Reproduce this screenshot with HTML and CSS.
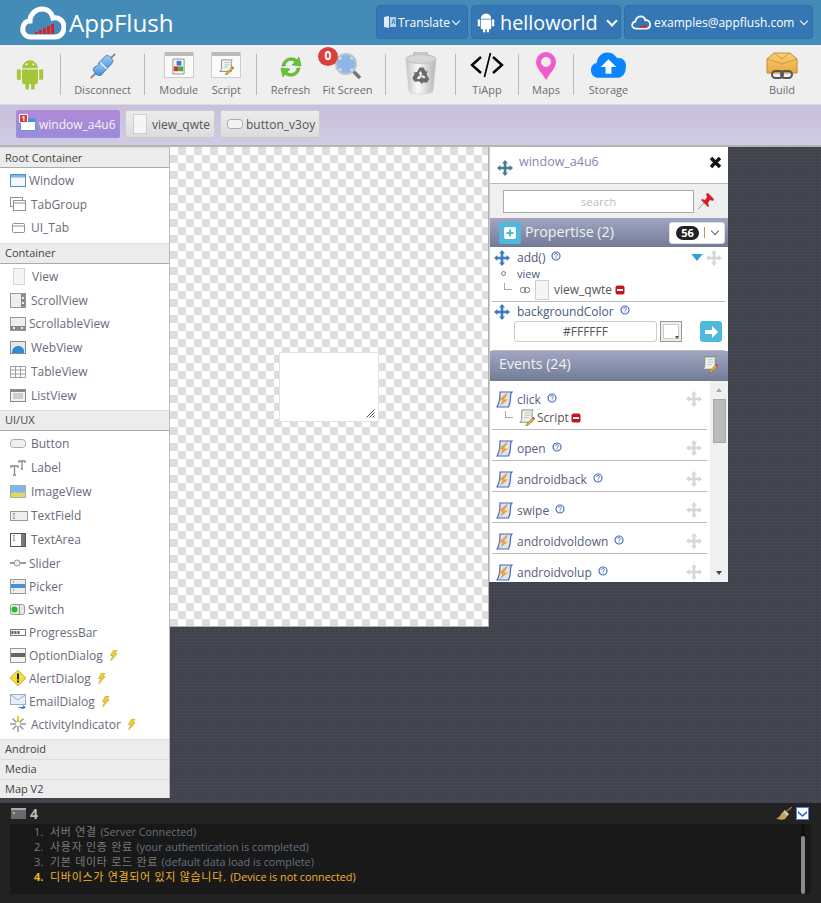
FILE: index.html
```html
<!DOCTYPE html>
<html>
<head>
    <title>AppFlush</title>
    <link rel="stylesheet" href="styles.css">
</head>
<body>
<svg class="sprite" width="0" height="0">
    <defs>
        <linearGradient id="blueGrad" x1="0" y1="0" x2="0" y2="1"><stop offset="0" stop-color="#9fd0f5"/><stop offset="1" stop-color="#3c8cd8"/></linearGradient>
        <linearGradient id="trashGrad" x1="0" y1="0" x2="1" y2="0"><stop offset="0" stop-color="#c4c4c4"/><stop offset=".4" stop-color="#fafafa"/><stop offset="1" stop-color="#b4b4b4"/></linearGradient>
        <linearGradient id="boxGrad" x1="0" y1="0" x2="0" y2="1"><stop offset="0" stop-color="#f8cf7a"/><stop offset="1" stop-color="#e8a93c"/></linearGradient>
        <symbol id="move" viewBox="0 0 16 16"><path d="M8 0l3 3.400H9.300v3.300h3.300V5L16 8l-3.400 3V9.300H9.300v3.300H11L8 16l-3-3.400h1.700V9.300H3.400V11L0 8l3.400-3v1.700h3.300V3.400H5z"/></symbol>
        <symbol id="help" viewBox="0 0 10 10"><circle cx="5" cy="5" r="4" fill="#fff" stroke="#4a6fc0" stroke-width="1.200"/><path d="M3.600 4c0-2 2.900-2 2.900-.3 0 1-1.400 1-1.400 2.100" fill="none" stroke="#4a6fc0" stroke-width="1"/><rect x="4.600" y="6.500" width="1" height="1" fill="#4a6fc0"/></symbol>
        <symbol id="remove" viewBox="0 0 10 10"><rect x=".5" y=".5" width="9" height="9" rx="2" fill="#c4161c"/><rect x="2" y="4" width="6" height="2" fill="#fff"/></symbol>
        <symbol id="bolt" viewBox="0 0 10 12"><path d="M5 0h4L6.500 4H9L2 12l2-6H1.500z" fill="#f0d030" stroke="#b89a20" stroke-width=".6"/></symbol>
        <symbol id="event" viewBox="0 0 17 17"><path d="M4 1h12c-1.500 1-1.500 3-1.500 5s-.5 7-2 10H1c2-3 3-8 3-15z" fill="#dbe4f6" stroke="#4a68b8" stroke-width="1.200"/><path d="M10 2.500L2.500 9.500h4L4 15l8-6.500H8l4-6z" fill="#e9a13b"/></symbol>
        <symbol id="scriptdoc" viewBox="0 0 18 18"><path d="M4 1h12c-1 1-1 2-1 4v9H2c1-1 2-2 2-5z" fill="#eef3ef" stroke="#7d8a80"/><path d="M7 4h6M7 6.500h6M6.500 9h5" stroke="#b8c4bc"/><path d="M9 16l7-7 1.500 1.500-7 7-2 .5z" fill="#e8b83c" stroke="#8a5a20" stroke-width=".6"/><path d="M15.500 9.500l1-1 1.500 1.500-1 1z" fill="#d0342c"/></symbol>
        <symbol id="viewbox" viewBox="0 0 14 20"><rect x=".5" y=".5" width="13" height="19" fill="#f5f5f5" stroke="#cfcfcf"/></symbol>
        <path id="recycleArrow" d="M12.500 22l3-5.500h4l2.500 4.200 1.700-1-1.700 5.300-5.300-1.100 1.700-1-1.600-2.700h-.6l-1.500 2.600z"/>
    </defs>
</svg>

<div class="topbar">
    <div class="brand">
        <svg class="cloud" viewBox="0 0 46 34" width="46" height="34">
            <path d="M11 31C4 31 2 25 3 21c1-4 4-6 7-6 0-6 5-12 12-12 6 0 10 4 11 9 5-1 11 2 11 9 0 6-4 10-9 10z" fill="none" stroke="#fff" stroke-width="5"/>
            <path d="M15 28v-2h3v2zM19 28v-4h3v4zM23 28v-6h3v6zM27 28v-8h3v8zM31 28v-10h3v10z" fill="#d8232a"/>
        </svg>
        <span class="brand-name">AppFlush</span>
    </div>
    <div class="top-buttons">
        <div class="btn btn-translate">
            <svg width="14" height="14" viewBox="0 0 14 14"><path d="M1 2l5-1v12l-5-1z" fill="#dfeaf5"/><path d="M7 2l6 0v10l-6 0z" fill="#b6d0ea"/><path d="M9 9l1.500-5L12 9" fill="none" stroke="#3577b4"/></svg>
            <span>Translate</span><i class="caret"></i>
        </div>
        <div class="btn btn-project">
            <svg width="18" height="21" viewBox="0 0 24 28"><path fill="#fff" d="M5 9a7 7 0 0 1 14 0zM5 10h14v11a2 2 0 0 1-2 2h-1v4h-3v-4h-2v4H8v-4H7a2 2 0 0 1-2-2zM1 10h3v9H1zM20 10h3v9h-3z"/></svg>
            <span>helloworld</span><i class="caret caret-big"></i>
        </div>
        <div class="btn btn-user">
            <svg width="20" height="15" viewBox="0 0 46 34"><path d="M11 31C4 31 2 25 3 21c1-4 4-6 7-6 0-6 5-12 12-12 6 0 10 4 11 9 5-1 11 2 11 9 0 6-4 10-9 10z" fill="none" stroke="#fff" stroke-width="4"/><path d="M18 29h18v-7l-18 5z" fill="#d8232a"/></svg>
            <span>examples@appflush.com</span><i class="caret"></i>
        </div>
    </div>
</div>

<div class="toolbar">
    <div class="tool-group tg-android">
        <svg width="28" height="32" viewBox="0 0 24 28"><path fill="#a4c639" d="M5 9a7 7 0 0 1 14 0zM5 10h14v11a2 2 0 0 1-2 2h-1v4.500h-3V23h-2v4.500H8V23H7a2 2 0 0 1-2-2zM.5 10H4v9H.5zM20 10h3.500v9H20z"/><circle cx="9" cy="5.500" r=".9" fill="#fff"/><circle cx="15" cy="5.500" r=".9" fill="#fff"/></svg>
    </div>
    <div class="tool-group tg-disconnect">
        <div class="tool">
            <svg class="tool-icon" viewBox="0 0 30 30" width="28" height="28">
                <path d="M28 2l-6 6M2 28l6-6" stroke="#888" stroke-width="2"/>
                <path d="M10 12l8-8c3-1 6 2 7 4s1 2-1 5l-7 7z" fill="url(#blueGrad)" stroke="#4a7ab0"/>
                <path d="M5 17l8-5 6 6-6 7c-3 1-6-1-7-3s-2-3-1-5z" fill="url(#blueGrad)" stroke="#4a7ab0"/>
                <path d="M12 11l7 7" stroke="#e8f2fb" stroke-width="1.500"/>
            </svg>
            <span>Disconnect</span>
        </div>
    </div>
    <div class="tool-group tg-files">
        <div class="tool">
            <div class="doc-frame"><svg viewBox="0 0 16 18" width="15" height="17"><path d="M2 1h12v16H2z" fill="#f2f4ef" stroke="#8c9488"/><rect x="6" y="3" width="5" height="5" fill="#3a7bd5"/><rect x="3" y="9" width="5" height="5" fill="#d0342c"/><rect x="8" y="9" width="5" height="5" fill="#4aa83c"/></svg></div>
            <span>Module</span>
        </div>
        <div class="tool">
            <div class="doc-frame"><svg viewBox="0 0 18 18" width="16" height="16"><use href="#scriptdoc"/></svg></div>
            <span>Script</span>
        </div>
    </div>
    <div class="tool-group tg-view">
        <div class="tool">
            <svg class="tool-icon refresh-icon" viewBox="0 0 24 24" width="24" height="24">
                <path d="M3 11C4 5 9 2 14 3c2 .4 3 1 4 2l2-3 2 9-9-1 3-3c-3-3-9-2-10 4z" fill="#66c42c" stroke="#3f9a1a" stroke-width=".5"/>
                <path d="M21 13c-1 6-6 9-11 8-2-.4-3-1-4-2l-2 3-2-9 9 1-3 3c3 3 9 2 10-4z" fill="#66c42c" stroke="#3f9a1a" stroke-width=".5"/>
            </svg>
            <span>Refresh</span>
        </div>
        <div class="tool">
            <span class="fit-badge">0</span>
            <svg class="tool-icon" viewBox="0 0 28 28" width="28" height="28">
                <path d="M18 18l8 8" stroke="#777" stroke-width="3.500"/>
                <circle cx="12" cy="12" r="10" fill="#8fb4e6" stroke="#b8c4cf" stroke-width="2"/>
                <path d="M8 6H6v2M16 6h2v2M8 18H6v-2M16 18h2v-2" fill="none" stroke="#e4eefa" stroke-width="1.200"/>
            </svg>
            <span>Fit Screen</span>
        </div>
    </div>
    <div class="tool-group tg-trash">
        <svg viewBox="0 0 34 46" width="34" height="46">
            <path d="M10 5V2h13v3" fill="none" stroke="#bbb" stroke-width="1.500"/>
            <ellipse cx="17" cy="8" rx="15" ry="4.500" fill="#d6d6d6" stroke="#bbb"/>
            <path d="M2 9l3 31c.5 4 23 4 24 0l3-31c-3 5-27 5-30 0z" fill="url(#trashGrad)" stroke="#c4c4c4" stroke-width=".5"/>
            <g fill="#6a6a6a">
                <use href="#recycleArrow"/>
                <use href="#recycleArrow" transform="rotate(120 17 25)"/>
                <use href="#recycleArrow" transform="rotate(240 17 25)"/>
            </g>
        </svg>
    </div>
    <div class="tool-group tg-tiapp">
        <div class="tool">
            <svg class="tool-icon" viewBox="0 0 34 26" width="34" height="26">
                <path d="M11 5L2 13l9 8M23 5l9 8-9 8" fill="none" stroke="#000" stroke-width="2.400"/>
                <path d="M20 1l-6 24" stroke="#d88a1c" stroke-width="1"/><path d="M20.500 1L14.500 25" stroke="#000" stroke-width="1.600"/>
            </svg>
            <span>TiApp</span>
        </div>
    </div>
    <div class="tool-group tg-maps">
        <div class="tool">
            <svg class="tool-icon" viewBox="0 0 20 28" width="20" height="28"><path fill-rule="evenodd" d="M10 0a10 10 0 0 1 10 10c0 6-6 11-10 18C6 21 0 16 0 10A10 10 0 0 1 10 0zm0 5a5 5 0 1 0 0 10 5 5 0 0 0 0-10z" fill="#f05ccc"/></svg>
            <span>Maps</span>
        </div>
    </div>
    <div class="tool-group tg-storage">
        <div class="tool">
            <svg class="tool-icon" viewBox="0 0 36 27" width="35" height="27"><path fill="#0a84ff" d="M8 26C3 26 0 23 0 18c0-4 3-7 6-7 0-6 5-11 11-11 5 0 8 3 10 6 5-1 9 3 9 7 0 1 0 1-.2 2 .2 7-3.800 11-8 11z"/><path fill="#fff" d="M18 7l8 8h-5v7h-6v-7h-5z"/></svg>
            <span>Storage</span>
        </div>
    </div>
    <div class="tool tool-build">
        <svg class="tool-icon" viewBox="0 0 32 30" width="32" height="30">
            <path d="M1 7l7-6h16l7 6v14H1z" fill="url(#boxGrad)" stroke="#c48a2c"/>
            <path d="M1 7l15 5 15-5M8 1l8 6 8-6" fill="none" stroke="#d79a3a"/>
            <rect x="6" y="19" width="11" height="7" rx="3.500" fill="none" stroke="#555" stroke-width="2"/>
            <rect x="15" y="19" width="11" height="7" rx="3.500" fill="none" stroke="#555" stroke-width="2"/>
        </svg>
        <span>Build</span>
    </div>
</div>

<div class="tabbar">
    <div class="tab tab-active">
        <span class="tab-flag">1</span>
        <svg width="16" height="13" viewBox="0 0 16 13"><rect x=".5" y=".5" width="15" height="12" fill="#fff" stroke="#5b9be0"/><rect x="1" y="1" width="14" height="3" fill="#4a90e2"/></svg>
        <span>window_a4u6</span>
    </div>
    <div class="tab tab-view">
        <svg width="14" height="20"><use href="#viewbox"/></svg>
        <span>view_qwte</span>
    </div>
    <div class="tab tab-button">
        <svg width="16" height="10" viewBox="0 0 16 10"><rect x=".5" y=".5" width="15" height="9" rx="3" fill="#f3f3f3" stroke="#aaa"/></svg>
        <span>button_v3oy</span>
    </div>
</div>

<div class="main">
    <div class="sidebar">
        <div class="side-head">Root Container</div>
        <div class="side-list side-list-root">
            <div class="side-item"><svg width="16" height="13" viewBox="0 0 16 13"><rect x=".5" y=".5" width="15" height="12" fill="#f7f7f7" stroke="#4a90d8"/><rect x="1" y="1" width="14" height="2.500" fill="#7db4ea"/></svg>Window</div>
            <div class="side-item ind"><svg width="16" height="14" viewBox="0 0 16 14"><rect x=".5" y=".5" width="12" height="9" fill="#fff" stroke="#8a949e"/><rect x="3.500" y="3.500" width="12" height="10" fill="#fff" stroke="#8a949e"/><path d="M4 6h11" stroke="#8a949e"/></svg>TabGroup</div>
            <div class="side-item ind"><svg width="13" height="10" viewBox="0 0 13 10" class="nudge"><rect x=".5" y=".5" width="12" height="9" rx="1" fill="#fff" stroke="#8a949e"/><path d="M1 3h11" stroke="#8a949e"/></svg>UI_Tab</div>
        </div>
        <div class="side-head">Container</div>
        <div class="side-list side-list-cont">
            <div class="side-item ind"><svg width="14" height="17" viewBox="0 0 14 20" class="nudge"><use href="#viewbox"/></svg>View</div>
            <div class="side-item ind"><svg width="16" height="15" viewBox="0 0 16 15"><rect x=".5" y=".5" width="15" height="14" fill="#eee" stroke="#999"/><rect x="11" y="1" width="4" height="13" fill="#888"/><rect x="12" y="4" width="2" height="2" fill="#eee"/><rect x="12" y="9" width="2" height="2" fill="#eee"/></svg>ScrollView</div>
            <div class="side-item"><svg width="16" height="14" viewBox="0 0 16 14"><rect x=".5" y=".5" width="15" height="13" fill="#eee" stroke="#999"/><rect x="1" y="9" width="14" height="4" fill="#888"/><rect x="3" y="10" width="2" height="2" fill="#eee"/><rect x="11" y="10" width="2" height="2" fill="#eee"/></svg>ScrollableView</div>
            <div class="side-item ind"><svg width="16" height="13" viewBox="0 0 16 13"><rect x=".5" y=".5" width="15" height="12" fill="#e8e8e8" stroke="#8a8a8a"/><path d="M2 12c0-5 3-7 6-7s6 2 6 5v2z" fill="#2e8bd8"/></svg>WebView</div>
            <div class="side-item ind"><svg width="16" height="12" viewBox="0 0 16 12"><path d="M.5.500h15v11H.500zM.5 4h15M.5 8h15M5.500 0v12M10.500 0v12" fill="none" stroke="#9aa0a6"/></svg>TableView</div>
            <div class="side-item ind"><svg width="16" height="13" viewBox="0 0 16 13"><rect x=".5" y=".5" width="15" height="12" fill="#f2f2f2" stroke="#8a8a8a"/><rect x="1" y="1" width="14" height="2" fill="#8a8a8a"/><path d="M3 5h10M3 7h10M3 9h10" stroke="#a8a8a8"/></svg>ListView</div>
        </div>
        <div class="side-head">UI/UX</div>
        <div class="side-list">
            <div class="side-item ind"><svg width="16" height="9" viewBox="0 0 16 9"><rect x=".5" y=".5" width="15" height="8" rx="3" fill="#f0f0f0" stroke="#aaa"/></svg>Button</div>
            <div class="side-item ind"><svg width="16" height="16" viewBox="0 0 16 16"><path d="M1 8V6h7v2M4.500 6v9M3 15h3M9 3V1h6v2M12 1v8M11 9h2" fill="none" stroke="#888" stroke-width="1.300"/></svg>Label</div>
            <div class="side-item ind"><svg width="16" height="13" viewBox="0 0 16 13"><rect x=".5" y=".5" width="15" height="12" fill="#7db8ec" stroke="#aaa"/><path d="M1 12V8c4-2 9 1 14-1v5z" fill="#e8d468"/></svg>ImageView</div>
            <div class="side-item"><svg width="18" height="10" viewBox="0 0 18 10"><rect x=".5" y=".5" width="17" height="9" fill="#eee" stroke="#999"/><path d="M3 2.500h2M4 2.500v5M3 7.500h2" stroke="#999"/></svg>TextField</div>
            <div class="side-item ind"><svg width="16" height="14" viewBox="0 0 16 14"><rect x=".5" y=".5" width="15" height="13" fill="#fff" stroke="#555"/><rect x="11" y="1" width="4" height="12" fill="#777"/><path d="M3 2.500h2M4 2.500v5M3 7.500h2" stroke="#999"/></svg>TextArea</div>
            <div class="side-item low"><svg width="16" height="8" viewBox="0 0 16 8"><path d="M0 4h16" stroke="#999" stroke-width="2"/><circle cx="7" cy="4" r="3" fill="#eee" stroke="#999"/></svg>Slider</div>
            <div class="side-item low"><svg width="16" height="15" viewBox="0 0 16 15"><rect x=".5" y=".5" width="15" height="14" fill="#eee" stroke="#999"/><rect x="1" y="5" width="14" height="4" fill="#4a90d8"/><path d="M3 3h1M3 11h1" stroke="#555"/></svg>Picker</div>
            <div class="side-item low"><svg width="15" height="11" viewBox="0 0 15 11"><rect x=".5" y=".5" width="14" height="10" rx="2" fill="#e8e8e8" stroke="#999"/><circle cx="4.500" cy="5.500" r="3" fill="#1cc41c"/><path d="M9.500 1v9" stroke="#999"/></svg>Switch</div>
            <div class="side-item low"><svg width="16" height="7" viewBox="0 0 16 7"><rect x=".5" y=".5" width="15" height="6" fill="#fff" stroke="#777"/><path d="M2.500 2v3M5.500 2v3M8.500 2v3" stroke="#555" stroke-width="2"/></svg>ProgressBar</div>
            <div class="side-item low"><svg width="16" height="15" viewBox="0 0 16 15"><rect x=".5" y=".5" width="15" height="14" fill="#f4f4f4" stroke="#999"/><rect x="1" y="5" width="14" height="4" fill="#666"/></svg>OptionDialog<svg class="bolt" width="9" height="11"><use href="#bolt"/></svg></div>
            <div class="side-item low"><svg width="16" height="16" viewBox="0 0 16 16"><path d="M8 0l8 8-8 8-8-8z" fill="#f4dc3c" stroke="#a89420" stroke-width=".6"/><rect x="7" y="3.500" width="2" height="6" fill="#222"/><rect x="7" y="10.500" width="2" height="2" fill="#222"/></svg>AlertDialog<svg class="bolt" width="9" height="11"><use href="#bolt"/></svg></div>
            <div class="side-item low"><svg width="16" height="15" viewBox="0 0 16 15"><rect x=".5" y=".5" width="15" height="10" fill="#e8eef8" stroke="#9ab0d0"/><path d="M1 1l7 5 7-5" fill="none" stroke="#9ab0d0"/><path d="M7 13h6v-2l3 2.500-3 1.500z" fill="#2e7cd8"/></svg>EmailDialog<svg class="bolt" width="9" height="11"><use href="#bolt"/></svg></div>
            <div class="side-item low ind"><svg width="16" height="16" viewBox="0 0 16 16"><path d="M8 0v6" stroke="#f0c828" stroke-width="2"/><path d="M8 10v6M0 8h6M10 8h6M2.500 2.500l4 4M13.500 2.500l-4 4M2.500 13.500l4-4M13.500 13.500l-4-4" stroke="#999" stroke-width="1.500"/></svg>ActivityIndicator<svg class="bolt" width="9" height="11"><use href="#bolt"/></svg></div>
        </div>
        <div class="side-head side-head-flat">Android</div>
        <div class="side-head side-head-flat">Media</div>
        <div class="side-head side-head-flat">Map V2</div>
    </div>

    <div class="stage">
        <div class="canvas">
            <div class="canvas-view"><span class="grip"></span></div>
        </div>
        <div class="panel">
            <div class="panel-title">
                <svg class="move-dark" width="16" height="16"><use href="#move"/></svg>
                <span>window_a4u6</span>
                <svg class="close-x" width="13" height="13" viewBox="0 0 13 13"><path d="M2 2l9 9M11 2l-9 9" stroke="#111" stroke-width="3.400"/></svg>
            </div>
            <div class="panel-search">
                <input class="search-input" type="text" placeholder="search">
                <svg width="16" height="16" viewBox="0 0 16 16"><path d="M0 16l6-6" stroke="#999"/><path d="M8 1l2-1 6 6-1 2-3-1-2 3 1 3-1 1-7-7 1-1 3 1 2-3z" fill="#d81e28"/></svg>
            </div>
            <div class="panel-head panel-head-props">
                <span class="plus-box"><svg width="12" height="12" viewBox="0 0 12 12"><rect width="12" height="12" rx="2" fill="#fff"/><path d="M6 2.500v7M2.500 6h7" stroke="#4fb9dc" stroke-width="2"/></svg></span>
                <span class="head-title">Propertise (2)</span>
                <div class="count-box"><span class="count">56</span><i class="count-sep"></i><i class="caret caret-dark"></i></div>
            </div>
            <div class="prop prop-add">
                <div class="prop-line">
                    <svg class="move-blue" width="16" height="16"><use href="#move"/></svg>
                    <span class="prop-name">add()</span>
                    <svg class="help" width="10" height="10"><use href="#help"/></svg>
                    <span class="prop-right">
                        <svg width="14" height="7" viewBox="0 0 13 8"><path d="M0 0h13L6.500 8z" fill="#2e9fe0"/></svg>
                        <svg class="move-light" width="16" height="16"><use href="#move"/></svg>
                    </span>
                </div>
                <div class="prop-sub"><i class="dot"></i><span>view</span></div>
                <div class="prop-child">
                    <i class="tree"></i>
                    <svg width="10" height="6" viewBox="0 0 10 6"><rect x=".5" y=".5" width="5" height="5" rx="2" fill="none" stroke="#777"/><rect x="4.500" y=".5" width="5" height="5" rx="2" fill="none" stroke="#777"/></svg>
                    <svg width="14" height="20"><use href="#viewbox"/></svg>
                    <span>view_qwte</span>
                    <svg class="child-remove" width="10" height="10"><use href="#remove"/></svg>
                </div>
            </div>
            <div class="prop prop-color">
                <div class="prop-line">
                    <svg class="move-blue" width="16" height="16"><use href="#move"/></svg>
                    <span class="prop-name">backgroundColor</span>
                    <svg class="help" width="10" height="10"><use href="#help"/></svg>
                </div>
                <div class="color-line">
                    <div class="color-value">#FFFFFF</div>
                    <div class="color-swatch"><i></i></div>
                    <span class="go-btn">
                        <svg width="13" height="12" viewBox="0 0 13 12"><path d="M7 0l6 6-6 6V8H0V4h7z" fill="#fff"/></svg>
                    </span>
                </div>
            </div>
            <div class="panel-head panel-head-events">
                <span class="head-title">Events (24)</span>
                <svg width="17" height="17"><use href="#scriptdoc"/></svg>
            </div>
            <div class="events">
                <div class="event-list">
                    <div class="event event-click">
                        <div class="event-line">
                            <svg width="17" height="17"><use href="#event"/></svg>
                            <span>click</span><svg class="help" width="10" height="10"><use href="#help"/></svg>
                            <svg class="move-light" width="16" height="16"><use href="#move"/></svg>
                        </div>
                        <div class="event-child"><i class="tree"></i><svg width="17" height="17"><use href="#scriptdoc"/></svg><span>Script</span><svg width="10" height="10"><use href="#remove"/></svg></div>
                    </div>
                    <div class="event"><div class="event-line"><svg width="17" height="17"><use href="#event"/></svg><span>open</span><svg class="help" width="10" height="10"><use href="#help"/></svg><svg class="move-light" width="16" height="16"><use href="#move"/></svg></div></div>
                    <div class="event"><div class="event-line"><svg width="17" height="17"><use href="#event"/></svg><span>androidback</span><svg class="help" width="10" height="10"><use href="#help"/></svg><svg class="move-light" width="16" height="16"><use href="#move"/></svg></div></div>
                    <div class="event"><div class="event-line"><svg width="17" height="17"><use href="#event"/></svg><span>swipe</span><svg class="help" width="10" height="10"><use href="#help"/></svg><svg class="move-light" width="16" height="16"><use href="#move"/></svg></div></div>
                    <div class="event"><div class="event-line"><svg width="17" height="17"><use href="#event"/></svg><span>androidvoldown</span><svg class="help" width="10" height="10"><use href="#help"/></svg><svg class="move-light" width="16" height="16"><use href="#move"/></svg></div></div>
                    <div class="event"><div class="event-line"><svg width="17" height="17"><use href="#event"/></svg><span>androidvolup</span><svg class="help" width="10" height="10"><use href="#help"/></svg><svg class="move-light" width="16" height="16"><use href="#move"/></svg></div></div>
                </div>
                <div class="scroll">
                    <i class="arrow-up"></i>
                    <div class="scroll-track"><div class="scroll-thumb"></div></div>
                    <i class="arrow-down"></i>
                </div>
            </div>
        </div>
    </div>
</div>

<div class="console">
    <div class="console-head">
        <svg width="15" height="11" viewBox="0 0 15 11"><rect width="15" height="11" fill="#6a6a6a"/><rect y="0" width="15" height="2" fill="#aaa"/><path d="M2 4l2 1-2 1" fill="none" stroke="#ddd" stroke-width=".7"/></svg>
        <b>4</b>
        <span class="console-tools">
            <svg width="16" height="14" viewBox="0 0 16 14"><path d="M16 0l-5 4" stroke="#b8602c" stroke-width="1.500"/><path d="M9 3l4 4-4 5c-3 1-6 1-9-1 3 0 4-2 5-4z" fill="#c9a25c"/><path d="M8 4l4 4" stroke="#ccc" stroke-width="2"/></svg>
            <span class="console-toggle"><svg width="9" height="6" viewBox="0 0 9 6"><path d="M0 0l4.500 4L9 0v2L4.500 6 0 2z" fill="#2e5cc4"/></svg></span>
        </span>
    </div>
    <div class="console-body">
        <ul class="log">
            <li><span class="num">1.</span>서버 연결 <span class="en">(Server Connected)</span></li>
            <li><span class="num">2.</span>사용자 인증 완료 <span class="en">(your authentication is completed)</span></li>
            <li><span class="num">3.</span>기본 데이타 로드 완료 <span class="en">(default data load is complete)</span></li>
            <li class="log-warn"><span class="num">4.</span>디바이스가 연결되어 있지 않습니다. <span class="en">(Device is not connected)</span></li>
        </ul>
        <div class="console-scroll"><div></div></div>
    </div>
</div>
</body>
</html>
```

FILE: styles.css
```css
* {
    box-sizing: border-box;
}
html, body {
    height: 100%;
}
body {
    margin: 0;
    height: 903px;
    overflow: hidden;
    display: flex;
    flex-direction: column;
    font-family: "Open Sans", "Noto Sans CJK KR", sans-serif;
    font-size: 12px;
    color: #666;
    background-color: #42454e;
    background-image: repeating-linear-gradient(0deg, rgba(255,255,255,.025) 0 1px, transparent 1px 3px), repeating-linear-gradient(90deg, rgba(0,0,0,.06) 0 1px, transparent 1px 3px);
}
svg {
    flex: none;
    display: block;
}
.sprite {
    position: absolute;
}
i {
    display: block;
    font-style: normal;
}

/* top bar */
.topbar {
    height: 45px;
    flex: none;
    display: flex;
    justify-content: space-between;
    background: #448bb8;
    color: #fff;
}
.brand {
    display: flex;
    align-items: center;
    padding-left: 20px;
    gap: 3px;
}
.cloud {
    margin-top: 1px;
}
.brand-name {
    font-size: 24.2px;
    line-height: 45px;
}
.top-buttons {
    display: flex;
    gap: 3px;
    padding: 5px 8px 0 0;
}
.btn {
    height: 34px;
    display: flex;
    align-items: center;
    gap: 3px;
    font-size: 12px;
    background: #3577b4;
    border: 1px solid #2f6ea6;
    border-radius: 4px;
}
.btn-translate {
    width: 92px;
    padding-left: 6px;
    gap: 1px;
}
.btn-project {
    width: 150px;
    padding-left: 5px;
    font-size: 19.8px;
    gap: 5px;
}
.btn-user {
    width: 189px;
    padding-left: 6px;
}
.caret {
    width: 6px;
    height: 6px;
    margin: -3px 0 0 2px;
    border-right: 1.5px solid #fff;
    border-bottom: 1.5px solid #fff;
    transform: rotate(45deg);
}
.btn-user .caret {
    margin-left: 4px;
}
.caret-big {
    width: 8px;
    height: 8px;
    margin-left: 5px;
    border-width: 2px;
}
.caret-dark {
    border-color: #666;
    border-width: 1px;
}

/* toolbar */
.toolbar {
    height: 59px;
    flex: none;
    display: flex;
    background: #efefef;
    padding: 9px 0 0;
}
.tool-group {
    display: flex;
    height: 41px;
    position: relative;
    justify-content: center;
}
.tool-group + .tool-group {
    border-left: 1px solid #bbb;
}
.tool {
    width: 57px;
    height: 46px;
    margin-top: -2px;
    display: flex;
    flex-direction: column;
    align-items: center;
    justify-content: flex-end;
    position: relative;
    line-height: 16px;
    font-size: 11px;
    white-space: nowrap;
    color: #6d6d6d;
}
.tool-icon {
    margin-bottom: auto;
}
.refresh-icon {
    margin-top: 3px;
}
.tg-android {
    width: 60px;
    padding-top: 4px;
}
.tg-disconnect {
    width: 84px;
}
.tg-files {
    width: 112px;
    padding: 0 6px 0 10px;
}
.tg-files .tool {
    width: 48px;
}
.tg-view {
    width: 129px;
    padding: 0 9px 0 5px;
    justify-content: flex-start;
}
.tg-trash {
    width: 70px;
}
.tg-trash svg {
    margin-top: -3px;
}
.tg-tiapp {
    width: 63px;
}
.tg-maps {
    width: 55px;
}
.tg-storage {
    width: 70px;
}
.tool-build {
    margin-left: auto;
    width: 78px;
}
.doc-frame {
    width: 30px;
    height: 26px;
    margin-bottom: auto;
    display: flex;
    align-items: center;
    justify-content: center;
    background: #fafafa;
    border: 1px solid #ccc;
    border-top: 4px solid #bbb;
    border-radius: 2px 2px 0 0;
}
.fit-badge {
    position: absolute;
    top: -5px;
    left: -1px;
    width: 20px;
    height: 19px;
    border-radius: 50%;
    background: #d9403c;
    color: #fff;
    font-weight: 700;
    font-size: 12px;
    line-height: 18px;
    text-align: center;
    z-index: 1;
}

/* tabs */
.tabbar {
    height: 43px;
    flex: none;
    display: flex;
    gap: 5px;
    padding: 5px 0 0 16px;
    background: linear-gradient(#c7bfdd, #d0cbe4);
    border-top: 1px solid #ddd;
    border-bottom: 2px solid #b5b5b5;
}
.tab {
    height: 28px;
    display: flex;
    align-items: center;
    gap: 5px;
    padding: 0 0 0 7px;
    font-size: 12px;
    color: #555;
    background: linear-gradient(#ececec, #dcdcdc);
    border: 1px solid #ccc;
    border-radius: 2px;
    position: relative;
}
.tab-view {
    width: 90px;
}
.tab-button {
    width: 100px;
    padding-left: 6px;
    gap: 3px;
}
.tab-active {
    color: #f4f4f4;
    background: linear-gradient(#b18ad8, #9a8cd8);
    border: none;
    padding-left: 4px;
    gap: 3px;
    width: 104px;
}
.tab-flag {
    position: absolute;
    top: 4px;
    left: 3px;
    width: 9px;
    height: 9px;
    background: #d9363c;
    border: 1px solid #fff;
    border-radius: 1px;
    color: #fff;
    font-size: 7px;
    font-weight: 700;
    line-height: 7px;
    text-align: center;
}

/* main */
.main {
    height: 656px;
    flex: none;
    display: flex;
}
.sidebar {
    width: 170px;
    height: 651px;
    flex: none;
    background: #fff;
    overflow: hidden;
    border-right: 1px solid #bbb;
}
.side-head {
    height: 21px;
    padding-left: 5px;
    line-height: 18px;
    font-size: 11px;
    color: #444;
    background: #ececec;
    border-top: 1px solid #ddd;
    border-bottom: 1px solid #aaa;
}
.side-head:first-child {
    line-height: 20px;
}
.side-head-flat {
    height: 20px;
    border-bottom: none;
}
.side-list {
    padding: 1px 0 3px 10px;
}
.side-list-root {
    padding-bottom: 3px;
}
.side-list-root .side-item {
    height: 23.5px;
}
.side-list-cont {
    padding-bottom: 2.5px;
}
.side-list-cont .side-item {
    height: 23.8px;
}
.side-item {
    height: 24px;
    display: flex;
    align-items: center;
    gap: 3px;
    color: #6a6a78;
    font-size: 12px;
    white-space: nowrap;
}
.side-item.low {
    height: 23px;
}
.side-item.ind {
    gap: 5px;
}
.nudge {
    margin: 0 1px 0 2px;
}
.bolt {
    margin-left: 3px;
}
.ind .bolt {
    margin-left: 1px;
}

/* canvas */
.stage {
    flex: 1;
    display: flex;
    align-items: flex-start;
}
.canvas {
    width: 319px;
    height: 480px;
    flex: none;
    display: flex;
    align-items: center;
    justify-content: center;
    padding-right: 1px;
    background-color: #fff;
    background-image: conic-gradient(#ddd 25%, #fff 25% 50%, #ddd 50% 75%, #fff 75%);
    background-size: 16px 16px;
    border-bottom: 1px solid #b0b0b0;
    border-right: 1px solid #b0b0b0;
}
.canvas-view {
    width: 100px;
    height: 70px;
    background: #fff;
    border: 1px solid #e2e2e2;
    position: relative;
}
.grip {
    position: absolute;
    right: 3px;
    bottom: 3px;
    width: 9px;
    height: 9px;
    background: repeating-linear-gradient(135deg, #555 0 1px, #fff 1px 2px);
    clip-path: polygon(100% 0, 100% 100%, 0 100%);
}

/* property panel */
.panel {
    width: 239px;
    height: 435px;
    flex: none;
    background: #fff;
    border-left: 1px solid #ccc;
    display: flex;
    flex-direction: column;
    overflow: hidden;
}
.panel-title {
    height: 37px;
    flex: none;
    display: flex;
    align-items: flex-start;
    padding: 6px 6px 0 7px;
    gap: 6px;
    border-bottom: 1px solid #bbb;
    color: #8289a8;
    font-size: 12.5px;
}
.move-dark {
    margin-top: 7px;
    fill: #4a7a94;
}
.move-blue {
    fill: #3b7bc4;
}
.move-light {
    fill: #d6d6d6;
}
.close-x {
    margin-left: auto;
    margin-top: 3px;
}
.panel-search {
    height: 34px;
    flex: none;
    display: flex;
    align-items: center;
    gap: 4px;
    padding: 0 0 0 13px;
    background: #efefef;
}
.search-input {
    width: 191px;
    height: 23px;
    border: 1px solid #aaa;
    background: #fff;
    text-align: center;
    font: 11.5px "Open Sans", sans-serif;
    padding: 0;
}
.search-input::placeholder {
    color: #bbb;
}
.panel-head {
    height: 29px;
    flex: none;
    display: flex;
    align-items: center;
    padding: 0 3px 0 9px;
    background: linear-gradient(#a0a6c2, #727b96);
    color: #f2f2f2;
    font-size: 14.2px;
}
.head-title {
    margin-top: -2px;
}
.plus-box {
    width: 22px;
    height: 22px;
    margin-right: 4px;
    display: flex;
    align-items: center;
    justify-content: center;
    background: #4fb9dc;
    border-radius: 3px;
}
.count-box {
    margin-left: auto;
    width: 56px;
    height: 22px;
    display: flex;
    align-items: center;
    gap: 5px;
    padding-left: 6px;
    background: #fff;
    border: 1px solid #ddd;
    border-radius: 3px;
}
.count {
    width: 23px;
    height: 14px;
    border-radius: 7px;
    background: #222;
    color: #fff;
    font-size: 11px;
    font-weight: 700;
    line-height: 14px;
    text-align: center;
}
.count-sep {
    width: 1px;
    height: 11px;
    background: #d88a5a;
}
.prop {
    flex: none;
    padding: 2px 0 0 5px;
    color: #4a5a78;
    border-bottom: 1px solid #bbb;
    margin: 0 3px 0 2px;
}
.prop-add {
    height: 55px;
}
.prop-color {
    height: 49px;
    padding-top: 1px;
}
.prop-line {
    display: flex;
    align-items: center;
    height: 17px;
    gap: 7px;
    font-size: 12px;
    margin-left: -3px;
}
.prop-right {
    margin-left: auto;
    display: flex;
    align-items: center;
    gap: 2px;
    padding-right: 3px;
}
.prop-name + .help {
    margin: -4px 0 0 -1px;
}
.prop-sub {
    display: flex;
    align-items: center;
    height: 14px;
    gap: 11px;
    padding-left: 4px;
    font-size: 11px;
}
.dot {
    width: 5px;
    height: 5px;
    border: 1px solid #777;
    border-radius: 50%;
}
.prop-child {
    display: flex;
    align-items: center;
    height: 19px;
    gap: 5px;
    padding-left: 7px;
    color: #555;
}
.child-remove {
    margin-left: -2px;
}
.tree {
    width: 8px;
    height: 7px;
    margin: -6px 3px 0 0;
    border-left: 1px solid #aaa;
    border-bottom: 1px solid #aaa;
}
.color-line {
    display: flex;
    align-items: center;
    gap: 3px;
    padding: 1px 0 0 17px;
}
.color-value {
    width: 143px;
    height: 21px;
    border: 1px solid #ccc;
    border-radius: 3px;
    line-height: 20px;
    text-align: center;
    color: #555;
}
.color-swatch {
    width: 22px;
    height: 21px;
    border: 1px solid #999;
    padding: 2px;
    background: #eee;
    position: relative;
}
.color-swatch i {
    width: 100%;
    height: 100%;
    background: #fff;
    border: 1px solid #ccc;
}
.color-swatch::after {
    content: "";
    position: absolute;
    right: 2px;
    bottom: 2px;
    border-left: 2px solid transparent;
    border-right: 2px solid transparent;
    border-top: 3px solid #555;
}
.go-btn {
    width: 22px;
    height: 21px;
    margin-left: 15px;
    display: flex;
    align-items: center;
    justify-content: center;
    background: #4fb9dc;
    border-radius: 3px;
}
.panel-head-events {
    padding: 0 10px 3px 9px;
    justify-content: space-between;
    height: 30px;
}
.events {
    flex: 1;
    min-height: 0;
    display: flex;
}
.event-list {
    flex: 1;
    overflow: hidden;
    padding: 1px 3px 0 2px;
}
.event {
    height: 31px;
    padding-top: 10px;
    border-bottom: 1px solid #bbb;
    color: #56607c;
}
.event-click {
    height: 48px;
    padding-top: 9px;
}
.event:last-child {
    border-bottom: none;
}
.event-line {
    display: flex;
    align-items: center;
    height: 16px;
    gap: 4px;
    padding: 0 5px 0 4px;
    font-size: 12px;
}
.event-line .help {
    margin: -3px 0 0 2px;
}
.event-line .move-light {
    margin-left: auto;
}
.event-child {
    display: flex;
    align-items: center;
    height: 19px;
    gap: 2px;
    padding-left: 13px;
    margin-top: 1px;
    color: #555;
}
.scroll {
    width: 18px;
    flex: none;
    display: flex;
    flex-direction: column;
    align-items: center;
    background: #f0f0f0;
}
.arrow-up, .arrow-down {
    width: 0;
    height: 0;
    margin: 7px 0;
    border-left: 3.5px solid transparent;
    border-right: 3.5px solid transparent;
}
.arrow-up {
    border-bottom: 4px solid #aaa;
}
.arrow-down {
    border-top: 4px solid #444;
}
.scroll-track {
    flex: 1;
    width: 100%;
    padding: 0 1px;
}
.scroll-thumb {
    width: 13px;
    height: 44px;
    margin: 0 auto;
    background: #bbb;
    border: 1px solid #a8a8a8;
}

/* console */
.console {
    flex: 1;
    background: #222;
    display: flex;
    flex-direction: column;
    padding: 0 10px 9px;
}
.console-head {
    height: 21px;
    flex: none;
    display: flex;
    align-items: center;
    gap: 4px;
    padding-left: 1px;
    color: #bbb;
    font-size: 14px;
}
.console-tools {
    margin-left: auto;
    display: flex;
    align-items: center;
    gap: 4px;
    margin-right: 2px;
}
.console-toggle {
    width: 13px;
    height: 13px;
    display: flex;
    align-items: center;
    justify-content: center;
    background: #fff;
    border: 1px solid #5a7ae0;
}
.console-body {
    flex: 1;
    display: flex;
    background: #191919;
}
.log {
    flex: 1;
    margin: 0;
    padding: 0 0 0 24px;
    list-style: none;
    font-size: 11px;
    letter-spacing: .7px;
    color: #7a7a7a;
}
.log li {
    height: 15px;
    line-height: 15px;
}
.num {
    display: inline-block;
    width: 16px;
    letter-spacing: 0;
}
.en {
    font-size: 10.8px;
    letter-spacing: 0;
    color: #66727e;
}
.log-warn, .log-warn .en {
    color: #f0b429;
}
.log-warn .num {
    font-weight: 700;
}
.console-scroll {
    width: 4px;
    margin-right: 6px;
    background: #111;
    padding-top: 12px;
}
.console-scroll div {
    height: 100%;
    background: #8a8a8a;
    border-radius: 2px;
}
```
